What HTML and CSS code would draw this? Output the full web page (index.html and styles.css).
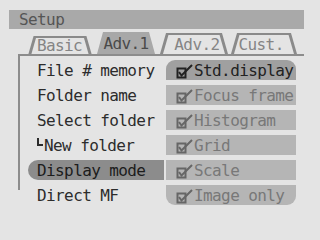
FILE: index.html
```html
<!DOCTYPE html>
<html>
<head>
<meta charset="utf-8">
<link rel="stylesheet" href="styles.css">
</head>
<body>
<div class="screen">
  <div class="titlebar">Setup</div>
  <div class="tabs">
    <div class="tab tab-basic"><span class="edge edge-l"></span><span class="label">Basic</span><span class="edge edge-r"></span></div>
    <div class="tab tab-active"><span class="label">Adv.1</span></div>
    <div class="tab tab-adv2"><span class="edge edge-l"></span><span class="label">Adv.2</span><span class="edge edge-r"></span></div>
    <div class="tab tab-cust"><span class="edge edge-l"></span><span class="label">Cust.</span><span class="edge edge-r"></span></div>
  </div>
  <div class="panel">
    <div class="vline"></div>
    <div class="rows">
      <div class="row">
        <div class="item">File # memory</div>
        <div class="opt opt-first opt-sel"><svg class="chk" width="18" height="15" viewBox="0 0 18 15"><rect x="1.5" y="4.5" width="8" height="9" fill="none" stroke="currentColor" stroke-width="2"/><path d="M3 8 L5.5 11.5 L16 1" fill="none" stroke="currentColor" stroke-width="2"/></svg>Std.display</div>
      </div>
      <div class="row">
        <div class="item">Folder name</div>
        <div class="opt"><svg class="chk" width="18" height="15" viewBox="0 0 18 15"><rect x="1.5" y="4.5" width="8" height="9" fill="none" stroke="currentColor" stroke-width="2"/><path d="M3 8 L5.5 11.5 L16 1" fill="none" stroke="currentColor" stroke-width="2"/></svg>Focus frame</div>
      </div>
      <div class="row">
        <div class="item">Select folder</div>
        <div class="opt"><svg class="chk" width="18" height="15" viewBox="0 0 18 15"><rect x="1.5" y="4.5" width="8" height="9" fill="none" stroke="currentColor" stroke-width="2"/><path d="M3 8 L5.5 11.5 L16 1" fill="none" stroke="currentColor" stroke-width="2"/></svg>Histogram</div>
      </div>
      <div class="row">
        <div class="item"><span class="corner"></span>New folder</div>
        <div class="opt"><svg class="chk" width="18" height="15" viewBox="0 0 18 15"><rect x="1.5" y="4.5" width="8" height="9" fill="none" stroke="currentColor" stroke-width="2"/><path d="M3 8 L5.5 11.5 L16 1" fill="none" stroke="currentColor" stroke-width="2"/></svg>Grid</div>
      </div>
      <div class="row">
        <div class="item item-sel">Display mode</div>
        <div class="opt"><svg class="chk" width="18" height="15" viewBox="0 0 18 15"><rect x="1.5" y="4.5" width="8" height="9" fill="none" stroke="currentColor" stroke-width="2"/><path d="M3 8 L5.5 11.5 L16 1" fill="none" stroke="currentColor" stroke-width="2"/></svg>Scale</div>
      </div>
      <div class="row">
        <div class="item">Direct MF</div>
        <div class="opt opt-last"><svg class="chk" width="18" height="15" viewBox="0 0 18 15"><rect x="1.5" y="4.5" width="8" height="9" fill="none" stroke="currentColor" stroke-width="2"/><path d="M3 8 L5.5 11.5 L16 1" fill="none" stroke="currentColor" stroke-width="2"/></svg>Image only</div>
      </div>
    </div>
  </div>
</div>
</body>
</html>
```
FILE: styles.css
```css
html, body {
  margin: 0;
  padding: 0;
  background: #e4e4e4;
}
body {
  width: 320px;
  height: 240px;
  overflow: hidden;
  font-family: "DejaVu Sans Mono", "Liberation Mono", monospace;
  font-size: 16px;
  letter-spacing: -0.6px;
  color: #2c2c2c;
}
.screen {
  padding: 10px 16px 0 9px;
}
.titlebar {
  height: 19px;
  box-sizing: border-box;
  padding: 1px 0 0 10px;
  line-height: 18px;
  background: #a9a9a9;
  color: #555;
}
.tabs {
  display: flex;
  align-items: flex-end;
  height: 21px;
  margin-top: 4px;
  padding-left: 19px;
}
.tab {
  display: flex;
  height: 21px;
  box-sizing: border-box;
}
.tab .label {
  flex: 1;
  text-align: center;
  line-height: 19px;
  border-top: 2px solid #8a8a8a;
  color: #858585;
}
.edge {
  width: 2.5px;
  background: #8a8a8a;
}
.edge-l {
  margin-left: 3px;
  transform: skewX(-16deg);
}
.edge-r {
  margin-right: 3px;
  transform: skewX(16deg);
}
.tab-basic {
  width: 63px;
  height: 18px;
}
.tab-basic .label {
  line-height: 16px;
}
.tab-active {
  width: 58px;
  margin-left: 6px;
  height: 22px;
  background: #a8a8a8;
  clip-path: polygon(0 100%, 6px 0, calc(100% - 6px) 0, 100% 100%);
}
.tab-active .label {
  border-top: none;
  line-height: 22px;
  color: #4a4a4a;
  padding-top: 1px;
}
.tab-adv2 {
  width: 67px;
  margin-left: 5px;
}
.tab-adv2 .label {
  text-align: right;
  padding-right: 2px;
}
.tab-cust {
  width: 65px;
  margin-left: 4px;
}
.tab-cust .label {
  text-align: left;
  padding-left: 2px;
}
.panel {
  display: grid;
  grid-template-columns: 2px 1fr;
  margin-left: 9px;
  border-top: 2px solid #8c8c8c;
}
.vline {
  height: 134px;
  background: #8c8c8c;
}
.rows {
  display: flex;
  flex-direction: column;
  gap: 5px;
  padding-top: 4px;
}
.row {
  display: flex;
  height: 20px;
}
.item {
  width: 136px;
  margin-left: 8px;
  box-sizing: border-box;
  padding: 2px 0 0 9px;
  line-height: 18px;
  white-space: nowrap;
}
.item-sel {
  background: #8c8c8c;
  border-radius: 10px 0 0 10px;
  color: #1c1c1c;
}
.corner {
  display: inline-block;
  width: 4px;
  height: 6px;
  border-left: 2px solid #2c2c2c;
  border-bottom: 2px solid #2c2c2c;
  vertical-align: 5px;
  margin-right: 1px;
}
.opt {
  display: flex;
  align-items: flex-start;
  width: 130px;
  margin-left: 2px;
  box-sizing: border-box;
  padding: 2px 0 0 10px;
  line-height: 18px;
  background: #b5b5b5;
  color: #787878;
  white-space: nowrap;
}
.opt .chk {
  color: #666;
}
.opt-sel {
  background: #a0a0a0;
  color: #222;
}
.opt-sel .chk {
  color: #222;
}
.opt-first {
  border-radius: 9px 9px 0 0;
}
.opt-last {
  border-radius: 0 0 9px 9px;
}
.chk {
  flex: none;
  margin-top: 2px;
}
```
